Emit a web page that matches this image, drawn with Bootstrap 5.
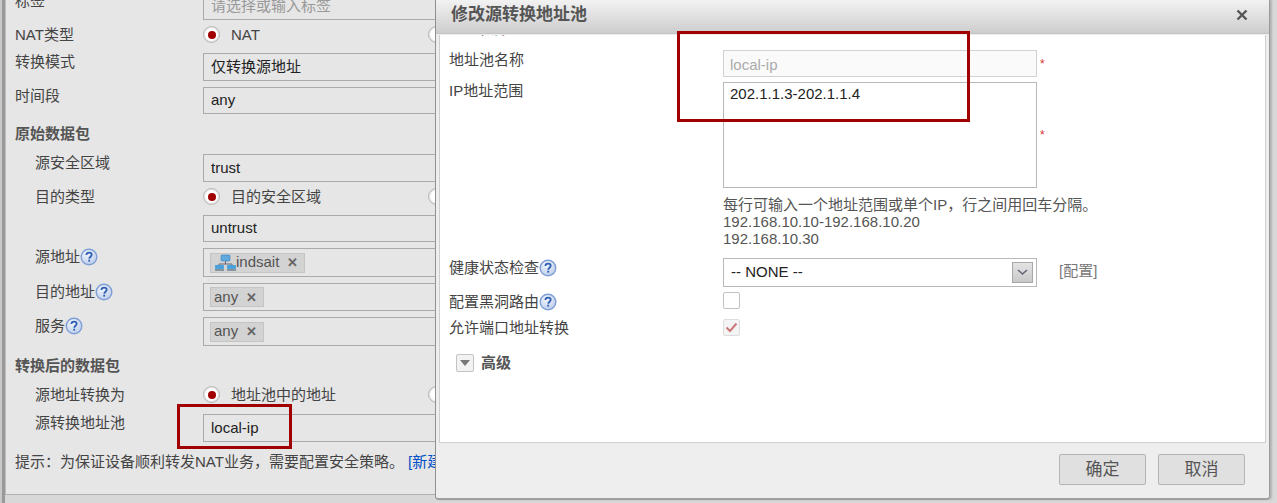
<!doctype html>
<html lang="zh"><head><meta charset="utf-8"><title>修改源转换地址池</title>
<link href="https://cdn.jsdelivr.net/npm/bootstrap@5.3.0/dist/css/bootstrap.min.css" rel="stylesheet">
<style>
html,body{height:503px;overflow:hidden}
body{background:linear-gradient(90deg,#c8c8c8 2px,#999 2px,#999 5px,#d8d8d8 5px);font-family:"Liberation Sans","Noto Sans CJK SC",sans-serif;font-size:15px;color:#444;position:relative}
.bg-panel{width:435px;height:495px;margin-left:5px;background:#e6e6e6;border-left:1px solid #bdbdbd;border-right:1px solid #a8a8a8;border-bottom:1px solid #b0b0b0;overflow:hidden;padding:0 0 0 9px}
.frow{display:flex;margin-bottom:6px;flex:none}
.bg-top{height:28px;margin-top:-8px;margin-bottom:1px}
.flab{width:188px;flex:none;line-height:18px;white-space:nowrap}
.flab.sub{padding-left:20px}
.fld{flex:1 1 auto;border:1px solid #aaa;margin-right:-12px;padding:0 7px;color:#222;display:flex;align-items:center}
.ph{color:#999}
.h21{height:21px}.h22{height:22px}.h26{height:26px}.h27{height:27px}.h28{height:28px}.h29{height:29px}
.htitle{font-weight:700;color:#555;align-items:flex-end;padding-bottom:5px}
.pt5{padding-top:5px}
.rad{width:17px;height:17px;border-radius:50%;border:1px solid #b5b5b5;background:#fff;flex:none;display:inline-flex;align-items:center;justify-content:center;box-shadow:inset 0 0 2px #aaa}
.rad i{width:8px;height:8px;border-radius:50%;background:#a00000}
.radline{display:flex;align-items:flex-start;flex:none;line-height:17px}
.radopt{display:flex;align-items:center;gap:11px;width:225px;flex:none;white-space:nowrap}
.tagx{display:inline-flex;align-items:center;background:#d3d3d3;border:1px solid #c4c4c4;height:20px;padding:0 2px 0 3px;margin-left:-1px;color:#555}
.tagx b{font-weight:700;color:#666;margin-left:8px;margin-right:4px;font-size:13px;line-height:1}
.qm{width:18px;height:18px;flex:none;vertical-align:-4px}
.hint{margin-top:9px;white-space:nowrap}
.hint a{color:#0050c8;text-decoration:none}
.dlg{position:absolute;left:435px;top:0;width:835px;height:500px;background:#eee;border-right:1px solid #9a9a9a;border-bottom:2px solid #a0a0a0;border-left:1px solid #909090;border-radius:0 0 4px 4px;display:flex;flex-direction:column;box-shadow:2px 0 2px #b4b4b4}
.dlg-head{height:34px;flex:none;background:linear-gradient(#f2f2f2,#cdcdcd);border-bottom:1px solid #c4c4c4;display:flex;align-items:center;justify-content:space-between;padding:0 21px 3px 15px;font-weight:700;font-size:17px;color:#555}
.dlg-body{height:408px;flex:none;margin:1px 3px 0;background:#fff;border:1px solid #cfcfcf;border-top:0;padding:0 9px;position:relative;overflow:hidden}
.mrow{display:flex;flex:none}
.mlab{width:274px;flex:none;white-space:nowrap;line-height:18px;color:#444;display:flex;align-items:flex-start}
.mfld{width:314px;flex:none}
.minp{height:27px;border:1px solid #d2d2d2;background:#fafafa;color:#aaa;padding:3px 6px 0;display:flex;align-items:center}
.mtxt{height:106px;border:1px solid #b8b8b8;padding:0 6px;color:#222}
.req{color:#d33;margin-left:3px;font-size:12px;line-height:1;align-self:center}
.r1{margin-top:15px}.r2{margin-top:5px}.r3{margin-top:11px}.r4{margin-top:8px}
.lp1{padding-top:1px}
.note{margin-top:8px;line-height:17px;color:#555;white-space:nowrap}
.msel{height:29px;border:1px solid #b8b8b8;display:flex;align-items:center;justify-content:space-between;padding:0 3px 0 7px;color:#222}
.selbtn{width:21px;height:21px;border:1px solid #a8a8a8;background:linear-gradient(#e4e4e4,#c9c9c9);display:flex;align-items:center;justify-content:center}
.cfg{margin-left:22px;color:#777;line-height:25px}
.cbx{width:17px;height:17px;border:1px solid #c2c2c2;border-radius:2px;background:#fff;display:flex;align-items:center;justify-content:center;flex:none}
.cbx.dis{background:#f4f4f4;border-color:#ddd}
.adv{display:flex;align-items:center;gap:7px;margin:15px 0 0 7px;font-weight:700;color:#555}
.advb{width:18px;height:18px;border:1px solid #c4c4c4;border-radius:2px;background:#f2f2f2;display:flex;align-items:center;justify-content:center}
.clip{position:absolute;left:20px;top:-14px;color:#777;line-height:15px}
.dlg-foot{flex:1;display:flex;justify-content:flex-end;align-items:flex-start;gap:12px;padding:11px 24px 0 0}
.dbtn{width:87px;height:31px;padding:0;border:1px solid #b4b4b4;border-radius:2px;background:#e0e0e0;color:#555;font-size:17px;line-height:1}
.anno{position:absolute;border:3px solid #a00000;pointer-events:none}
.a1{left:177px;top:404px;width:115px;height:45px}
.a2{left:677px;top:31px;width:293px;height:91px}
</style></head><body>
<svg width="0" height="0" class="position-absolute"><defs>
<radialGradient id="qg" cx=".4" cy=".3" r=".8"><stop offset="0" stop-color="#f2f6fd"/><stop offset="1" stop-color="#b7c9e8"/></radialGradient>
<symbol id="qmark" viewBox="0 0 18 18"><circle cx="9" cy="9" r="7.8" fill="url(#qg)" stroke="#7f9fd6" stroke-width="1.4"/><path d="M6.4 7.1c0-1.6 1.1-2.5 2.7-2.5s2.6.9 2.6 2.2c0 1.9-2.4 1.9-2.4 3.9" fill="none" stroke="#2f5fb0" stroke-width="1.8"/><rect x="8.3" y="11.7" width="1.8" height="1.9" fill="#2f5fb0"/></symbol>
</defs></svg>

<div class="bg-panel">
  <div class="frow bg-top"><div class="flab">标签</div><div class="fld ph">请选择或输入标签</div></div>
  <div class="frow h26"><div class="flab pt5">NAT类型</div><div class="radline pt5"><span class="radopt"><span class="rad"><i></i></span>NAT</span><span class="rad"></span></div></div>
  <div class="frow h28"><div class="flab">转换模式</div><div class="fld">仅转换源地址</div></div>
  <div class="frow h27"><div class="flab">时间段</div><div class="fld">any</div></div>
  <div class="frow h28 htitle"><div class="flab">原始数据包</div></div>
  <div class="frow h28"><div class="flab sub">源安全区域</div><div class="fld">trust</div></div>
  <div class="frow h21"><div class="flab sub">目的类型</div><div class="radline"><span class="radopt"><span class="rad"><i></i></span>目的安全区域</span><span class="rad"></span></div></div>
  <div class="frow h27"><div class="flab"></div><div class="fld">untrust</div></div>
  <div class="frow h29"><div class="flab sub">源地址<svg class="qm"><use href="#qmark"/></svg></div><div class="fld"><span class="tagx">
    <svg width="22" height="18" viewBox="0 0 22 18"><rect x="7" y="1" width="9" height="6" rx="1" fill="#5fa8e0" stroke="#3b7cb5" stroke-width=".6"/><path d="M11.500 7v3M5 10h13M5 10v1M18 10v1" stroke="#667" fill="none"/><rect x="1" y="11" width="9" height="4" rx="1" fill="#4aa2dc"/><rect x="13" y="11" width="9" height="4" rx="1" fill="#4aa2dc"/><rect x="1" y="15" width="9" height="2" fill="#8a949c"/><rect x="13" y="15" width="9" height="2" fill="#8a949c"/></svg>indsait<b>✕</b></span></div></div>
  <div class="frow h28"><div class="flab sub">目的地址<svg class="qm"><use href="#qmark"/></svg></div><div class="fld"><span class="tagx">any<b>✕</b></span></div></div>
  <div class="frow h29"><div class="flab sub">服务<svg class="qm"><use href="#qmark"/></svg></div><div class="fld"><span class="tagx">any<b>✕</b></span></div></div>
  <div class="frow h28 htitle"><div class="flab">转换后的数据包</div></div>
  <div class="frow h22"><div class="flab sub">源地址转换为</div><div class="radline"><span class="radopt"><span class="rad"><i></i></span>地址池中的地址</span><span class="rad"></span></div></div>
  <div class="frow h28"><div class="flab sub">源转换地址池</div><div class="fld">local-ip</div></div>
  <div class="hint">提示：为保证设备顺利转发NAT业务，需要配置安全策略。 <a href="#">[新建]</a></div>
</div>

<div class="dlg">
  <div class="dlg-head"><span>修改源转换地址池</span>
    <svg width="12" height="12" viewBox="0 0 12 12"><path d="M1.500 1.500l9 9M10.500 1.500l-9 9" stroke="#555" stroke-width="2.400"/></svg></div>
  <div class="dlg-body">
    <div class="clip">基本设置</div>
    <div class="mrow r1"><div class="mlab lp1">地址池名称</div><div class="mfld"><div class="minp">local-ip</div></div><span class="req">*</span></div>
    <div class="mrow r2"><div class="mlab">IP地址范围</div><div class="mfld"><div class="mtxt">202.1.1.3-202.1.1.4</div></div><span class="req">*</span></div>
    <div class="mrow"><div class="mlab"></div><div class="note">每行可输入一个地址范围或单个IP，行之间用回车分隔。<br>192.168.10.10-192.168.10.20<br>192.168.10.30</div></div>
    <div class="mrow r3"><div class="mlab lp1">健康状态检查<svg class="qm"><use href="#qmark"/></svg></div><div class="mfld"><div class="msel">-- NONE --<span class="selbtn"><svg width="11" height="7" viewBox="0 0 11 7"><path d="M1 1l4.500 4 4.500-4" fill="none" stroke="#667" stroke-width="1.600"/></svg></span></div></div><span class="cfg">[配置]</span></div>
    <div class="mrow r2"><div class="mlab lp1">配置黑洞路由<svg class="qm"><use href="#qmark"/></svg></div><div class="cbx"></div></div>
    <div class="mrow r4"><div class="mlab">允许端口地址转换</div><div class="cbx dis"><svg width="13" height="11" viewBox="0 0 13 11"><path d="M1.500 5.500l3.500 3.500 6.500-7.500" fill="none" stroke="#c77" stroke-width="2"/></svg></div></div>
    <div class="adv"><span class="advb"><svg width="10" height="6" viewBox="0 0 10 6"><path d="M0 0h10L5 6z" fill="#777"/></svg></span>高级</div>
  </div>
  <div class="dlg-foot"><button class="btn dbtn">确定</button><button class="btn dbtn">取消</button></div>
</div>
<div class="anno a1"></div><div class="anno a2"></div>
</body></html>
